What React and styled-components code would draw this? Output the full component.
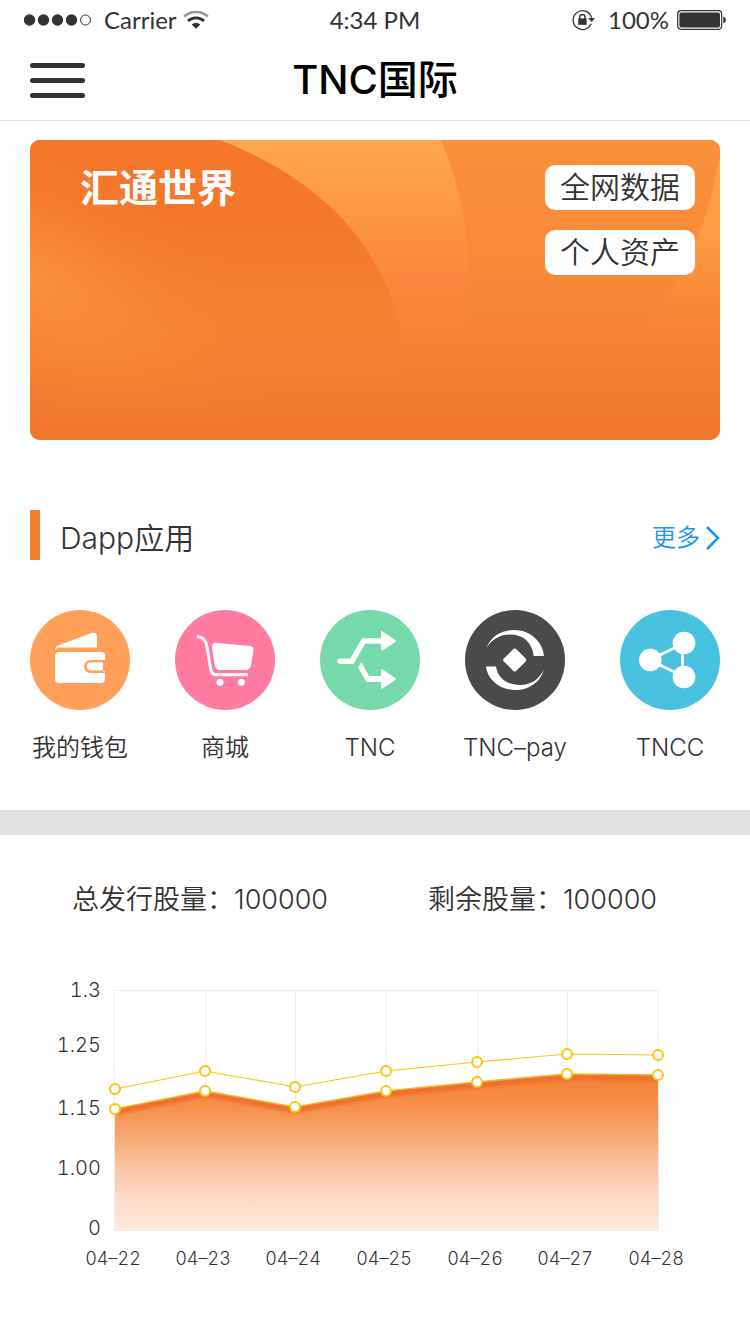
import React from "react";
import styled, { createGlobalStyle } from "styled-components";

const GlobalStyle = createGlobalStyle`
  *, *::before, *::after { box-sizing: border-box; }
  body {
    margin: 0;
    background: #fff;
    color: #333;
    font-family: Inter, "Noto Sans CJK SC", sans-serif;
    font-weight: 350;
  }
  button { font: inherit; color: inherit; border: 0; padding: 0; cursor: pointer; }
  a { color: inherit; text-decoration: none; }
  h1, h2, p { margin: 0; font-weight: inherit; }
  svg { display: block; }
`;

const Page = styled.div`
  min-height: 100vh;
  padding-bottom: 24px;
`;

const Bar = styled.div`
  display: grid;
  grid-template-columns: 1fr auto 1fr;
  align-items: center;
`;

const StatusBar = styled(Bar)`
  height: 40px;
  padding: 0 24px;
  font-family: Lato, sans-serif;
  font-size: 24px;
  font-weight: 400;
  line-height: 40px;
`;

const StatusGroup = styled.div`
  display: flex;
  align-items: center;
  gap: ${(p) => p.$gap}px;
  justify-content: ${(p) => (p.$end ? "flex-end" : "flex-start")};
`;

const Header = styled(Bar)`
  height: 81px;
  padding: 0 30px;
  border-bottom: 1px solid #e2e2e2;
`;

const MenuButton = styled.button`
  display: flex;
  flex-direction: column;
  gap: 10px;
  width: 55px;
  background: none;
`;

const MenuLine = styled.span`
  height: 5px;
  border-radius: 3px;
  background: #333;
`;

const Title = styled.h1`
  font-size: 40px;
  font-weight: 500;
  line-height: 60px;
  color: #000;
`;

const Card = styled.section`
  position: relative;
  display: flex;
  justify-content: space-between;
  align-items: flex-start;
  min-height: 300px;
  margin: 19px 30px 0;
  padding: 25px 25px 25px 50px;
  border-radius: 10px;
  overflow: hidden;
  background: #f58236;
`;

const CardArt = styled.svg`
  position: absolute;
  inset: 0;
  width: 100%;
  height: 100%;
`;

const CardTitle = styled.h2`
  position: relative;
  font-size: 39px;
  font-weight: 700;
  line-height: 45px;
  color: #fff;
`;

const CardActions = styled.div`
  position: relative;
  display: flex;
  flex-direction: column;
  gap: 20px;
`;

const CardButton = styled.button`
  width: 150px;
  height: 45px;
  border-radius: 10px;
  background: #fff;
  font-size: 30px;
  line-height: 45px;
`;

const SectionHead = styled.div`
  display: flex;
  align-items: center;
  justify-content: space-between;
  margin: 70px 30px 0;
`;

const SectionTitle = styled.h2`
  padding: 6px 0 0 20px;
  border-left: 10px solid #f08030;
  font-size: 30px;
  line-height: 44px;
`;

const MoreLink = styled.a`
  display: flex;
  align-items: center;
  gap: 6px;
  padding-top: 6px;
  font-size: 24px;
  line-height: 44px;
  color: #1296f5;
`;

const AppList = styled.nav`
  display: flex;
  gap: 45px;
  margin: 50px 30px 0;
`;

const AppLink = styled.a`
  display: flex;
  flex-direction: column;
  align-items: center;
  gap: 20px;
  width: 100px;
  font-size: 24px;
  line-height: 36px;
  white-space: nowrap;

  &:last-child { margin-left: auto; }
`;

const AppIcon = styled.svg`
  width: 100px;
  height: 100px;
  border-radius: 50%;
  background: ${(p) => p.$color};
`;

const Divider = styled.div`
  height: 25px;
  margin-top: 44px;
  background: #e2e2e2;
`;

const Stats = styled.div`
  display: flex;
  flex-wrap: wrap;
  justify-content: space-between;
  margin-top: 45px;
  padding: 0 93px 0 72px;
  font-size: 27px;
  line-height: 40px;
`;

const Chart = styled.svg`
  width: 100%;
  height: auto;
  margin-top: 50px;
`;

const AxisText = styled.text`
  font-size: ${(p) => p.$size}px;
  font-variant-numeric: tabular-nums;
  fill: #333;
  text-anchor: ${(p) => p.$anchor};
`;

const SignalDots = () => (
  <svg width="68" height="12" viewBox="0 0 68 12" aria-hidden="true">
    {[6, 20, 34, 48].map((x) => (
      <circle key={x} cx={x - 0.5} cy="6" r="5.7" fill="#333" />
    ))}
    <circle cx="61.5" cy="6" r="5" fill="none" stroke="#333" />
  </svg>
);

const Wifi = () => (
  <svg width="26" height="20" viewBox="0 0 26 20" aria-hidden="true" fill="none">
    <path d="M1.2 6.5C7.5 .4 18.5 .4 24.8 6.500" stroke="#999" strokeWidth="2.600" />
    <path d="M5 11C9.2 6.800 16.8 6.800 21 11" stroke="#333" strokeWidth="2.800" />
    <path d="M8.6 14.5Q13 10.8 17.4 14.500L13 18.800Z" fill="#333" />
  </svg>
);

const RotationLock = () => (
  <svg width="24" height="22" viewBox="0 0 24 22" aria-hidden="true" fill="none">
    <path d="M19.2 14.8A9.4 9.4 0 1 1 19.6 8.6" stroke="#333" strokeWidth="1.3" />
    <path d="M16.2 9H23L19.6 13Z" fill="#333" />
    <rect x="6.2" y="9.4" width="8.4" height="6.4" fill="#333" />
    <path d="M7.8 10V8a2.6 2.6 0 0 1 5.2 0v2" stroke="#333" strokeWidth="1.5" />
  </svg>
);

const Battery = () => (
  <svg width="49" height="20" viewBox="0 0 49 20" aria-hidden="true">
    <rect x=".7" y=".7" width="44" height="18.6" rx="3.5" fill="none" stroke="#333" strokeWidth="1.2" />
    <rect x="2.4" y="2.4" width="40.6" height="15.2" rx="2" fill="#333" />
    <path d="M46.3 6.6Q49 7.6 49 10T46.3 13.4Z" fill="#333" />
  </svg>
);

const CardBackground = () => (
  <CardArt viewBox="0 0 690 300" preserveAspectRatio="none" aria-hidden="true">
    <defs>
      <linearGradient id="base" x1="0" y1="0" x2="0" y2="1">
        <stop offset="0" stopColor="#fb9038" />
        <stop offset=".4" stopColor="#f98a3a" />
        <stop offset=".7" stopColor="#f58135" />
        <stop offset="1" stopColor="#f0762b" />
      </linearGradient>
      <linearGradient id="band" x1="0" y1="0" x2="0" y2="210" gradientUnits="userSpaceOnUse">
        <stop offset="0" stopColor="#ffa84b" />
        <stop offset=".35" stopColor="#fd9742" />
        <stop offset=".66" stopColor="#fb873e" />
        <stop offset="1" stopColor="#f78339" stopOpacity="0" />
      </linearGradient>
      <linearGradient id="left" x1="0" y1="0" x2="0" y2="240" gradientUnits="userSpaceOnUse">
        <stop offset="0" stopColor="#f4772a" />
        <stop offset=".35" stopColor="#f4772b" />
        <stop offset=".65" stopColor="#f48030" />
        <stop offset="1" stopColor="#f48032" stopOpacity="0" />
      </linearGradient>
      <radialGradient id="glow" cx="0" cy="0" r="1" gradientUnits="userSpaceOnUse" gradientTransform="translate(0 140) rotate(25) scale(270 130)">
        <stop offset="0" stopColor="#fb923b" />
        <stop offset=".35" stopColor="#fa8d38" stopOpacity=".65" />
        <stop offset=".7" stopColor="#f78732" stopOpacity=".2" />
        <stop offset="1" stopColor="#f6832f" stopOpacity="0" />
      </radialGradient>
      <linearGradient id="right" x1="0" y1="0" x2="0" y2="190" gradientUnits="userSpaceOnUse">
        <stop offset="0" stopColor="#ffa347" />
        <stop offset=".5" stopColor="#fd9c42" />
        <stop offset="1" stopColor="#f88d38" stopOpacity="0" />
      </linearGradient>
    </defs>
    <rect width="690" height="300" fill="url(#base)" />
    <path d="M190 0H411C436 60 448 135 430 210H300Z" fill="url(#band)" />
    <path d="M0 0H190C300 43 372 120 378 240H0Z" fill="url(#left)" />
    <rect width="400" height="300" fill="url(#glow)" />
    <path d="M690 17C676 90 652 150 608 190H690Z" fill="url(#right)" />
  </CardArt>
);

const apps = [
  {
    label: "我的钱包",
    color: "#ff9f59",
    art: (
      <>
        <path d="M25 39Q25.500 36.500 28.500 35.300L61 23.300Q66.800 21.500 67 27V37.500H29Q26.500 37.500 25 40Z" fill="#fff" />
        <rect x="25" y="42" width="50" height="31" rx="4" fill="#fff" />
        <path d="M76 50H60.500a6.500 6.500 0 0 0 0 13H76Z" fill="#ff9f59" />
        <path d="M73 52.200H61a4.100 4.100 0 0 0 0 8.200H73Z" fill="#fff" />
        <path d="M73 61.700H75" stroke="#fff" />
      </>
    ),
  },
  {
    label: "商城",
    color: "#ff7ca0",
    art: (
      <>
        <path d="M22 26.500C29 27 31 31 32 37L35.500 58Q36.300 64.700 41 64.700H73" fill="none" stroke="#fff" strokeWidth="3" />
        <path d="M40.500 32.700L75 36Q79 36.500 78.700 39.500L76 55Q75 60 71 60H45Q40.500 60 39.700 55L37 37Q37 32.500 40.500 32.700Z" fill="#fff" />
        <circle cx="45" cy="72.300" r="3.500" fill="#fff" />
        <circle cx="66.300" cy="72.300" r="3.500" fill="#fff" />
      </>
    ),
  },
  {
    label: "TNC",
    color: "#76d9ab",
    art: (
      <>
        <path d="M20 51.300H32L43.500 31H63" fill="none" stroke="#fff" strokeWidth="5.500" />
        <circle cx="20" cy="51.300" r="2.750" fill="#fff" />
        <path d="M61 22Q61 20.500 62.500 21.500L75.300 30Q76.500 31 75.300 32L62.500 40.500Q61 41.300 61 40Z" fill="#fff" />
        <path d="M41.300 52L49 66H61V60Q61 58.500 62.500 59.500L75.300 68Q76.500 69 75.300 70L62.500 78.500Q61 79.300 61 78V72H46.500L38 57.500Z" fill="#fff" />
      </>
    ),
  },
  {
    label: "TNC–pay",
    color: "#4a4a4a",
    art: (
      <>
        <path d="M21.500 38C26 26 37 20 49 20C65 20 77.500 31 79 46H68.700C67 32 58 24.500 45 24.500C35 24.500 27 29 21.500 38Z" fill="#fff" />
        <path d="M79 59.500C75 73 63 80 51 80C35 80 22.500 70 21 56.500H31C33 69 43 75 55 75C66 75 73.500 70 79 59.500Z" fill="#fff" />
        <rect x="41" y="41.300" width="17.400" height="17.400" rx="2" transform="rotate(45 49.700 50)" fill="#fff" />
      </>
    ),
  },
  {
    label: "TNCC",
    color: "#49c1e0",
    art: (
      <>
        <path d="M64 33L30 50L64 67M62.500 33V67" fill="none" stroke="#fff" strokeWidth="2.800" />
        <circle cx="30.300" cy="50" r="11.300" fill="#fff" />
        <circle cx="64" cy="33" r="11.300" fill="#fff" />
        <circle cx="64" cy="67" r="11.300" fill="#fff" />
      </>
    ),
  },
];

const yTicks = [
  { label: "1.3", y: 20 },
  { label: "1.25", y: 75 },
  { label: "1.15", y: 138 },
  { label: "1.00", y: 198 },
  { label: "0", y: 258 },
];

const days = [
  { label: "04–22", x: 115, y: 139 },
  { label: "04–23", x: 205, y: 121 },
  { label: "04–24", x: 295, y: 137 },
  { label: "04–25", x: 386, y: 121 },
  { label: "04–26", x: 477, y: 112 },
  { label: "04–27", x: 567, y: 104 },
  { label: "04–28", x: 658, y: 105 },
];

const SERIES_GAP = 20;
const lineAt = (dy) => days.map((d) => `${d.x},${d.y + dy}`).join(" ");
const areaPoints = `${lineAt(0)} 658,260 115,260`;

const TrendChart = () => (
  <Chart viewBox="0 0 750 310" role="img" aria-label="04–22 – 04–28">
    <defs>
      <linearGradient id="area" x1="0" y1="104" x2="0" y2="260" gradientUnits="userSpaceOnUse">
        <stop offset="0" stopColor="#f58233" />
        <stop offset=".22" stopColor="#f6914a" />
        <stop offset=".42" stopColor="#f8aa75" />
        <stop offset=".62" stopColor="#fbc8a8" />
        <stop offset=".82" stopColor="#fddcc9" />
        <stop offset="1" stopColor="#feeadf" />
      </linearGradient>
      <clipPath id="areaClip">
        <polygon points={areaPoints} />
      </clipPath>
      <filter id="soft" x="-5%" y="-50%" width="110%" height="200%">
        <feGaussianBlur stdDeviation="1.500" />
      </filter>
    </defs>
    <path
      d={`M114.500 20.500H658.500V260.500H114.500Z ${days.slice(1, -1).map((d) => `M${d.x + 0.5} 20V260`).join(" ")}`}
      fill="none"
      stroke="#ececec"
    />
    <polygon points={areaPoints} fill="url(#area)" />
    <g clipPath="url(#areaClip)">
      <polyline points={lineAt(0)} fill="none" stroke="#ee7030" strokeWidth="12" filter="url(#soft)" />
    </g>
    <polyline points={lineAt(-SERIES_GAP)} fill="none" stroke="#fdc50b" strokeWidth="1.200" />
    <polyline points={lineAt(0)} fill="none" stroke="#f9b418" strokeWidth="1.500" />
    {days.map((d) =>
      [d.y - SERIES_GAP, d.y].map((y) => (
        <circle key={`${d.x}-${y}`} cx={d.x} cy={y} r="5" fill="#fff" stroke="#fdc50b" strokeWidth="2" />
      ))
    )}
    {yTicks.map((t) => (
      <AxisText key={t.label} x="101" y={t.y + 7} $size={20} $anchor="end">{t.label}</AxisText>
    ))}
    {days.map((d) => (
      <AxisText key={d.label} x={d.x - 2} y="295" $size={18} $anchor="middle">{d.label}</AxisText>
    ))}
  </Chart>
);

export default function App() {
  return (
    <Page>
      <GlobalStyle />
      <StatusBar>
        <StatusGroup $gap={12}>
          <SignalDots />
          <StatusGroup $gap={6}>
            <span>Carrier</span>
            <Wifi />
          </StatusGroup>
        </StatusGroup>
        <span>4:34 PM</span>
        <StatusGroup $gap={8} $end>
          <StatusGroup $gap={12}>
            <RotationLock />
            <span>100%</span>
          </StatusGroup>
          <Battery />
        </StatusGroup>
      </StatusBar>
      <Header>
        <MenuButton type="button" aria-label="菜单">
          <MenuLine />
          <MenuLine />
          <MenuLine />
        </MenuButton>
        <Title>TNC国际</Title>
      </Header>
      <main>
        <Card>
          <CardBackground />
          <CardTitle>汇通世界</CardTitle>
          <CardActions>
            <CardButton type="button">全网数据</CardButton>
            <CardButton type="button">个人资产</CardButton>
          </CardActions>
        </Card>
        <SectionHead>
          <SectionTitle>Dapp应用</SectionTitle>
          <MoreLink href="#more">
            更多
            <svg width="14" height="24" viewBox="0 0 14 24" aria-hidden="true">
              <path d="M1 1L12 12L1 23" fill="none" stroke="#1296f5" strokeWidth="2.500" />
            </svg>
          </MoreLink>
        </SectionHead>
        <AppList>
          {apps.map((app) => (
            <AppLink key={app.label} href="#app">
              <AppIcon viewBox="0 0 100 100" $color={app.color} aria-hidden="true">
                {app.art}
              </AppIcon>
              {app.label}
            </AppLink>
          ))}
        </AppList>
        <Divider />
        <Stats>
          <p>总发行股量：100000</p>
          <p>剩余股量：100000</p>
        </Stats>
        <TrendChart />
      </main>
    </Page>
  );
}
